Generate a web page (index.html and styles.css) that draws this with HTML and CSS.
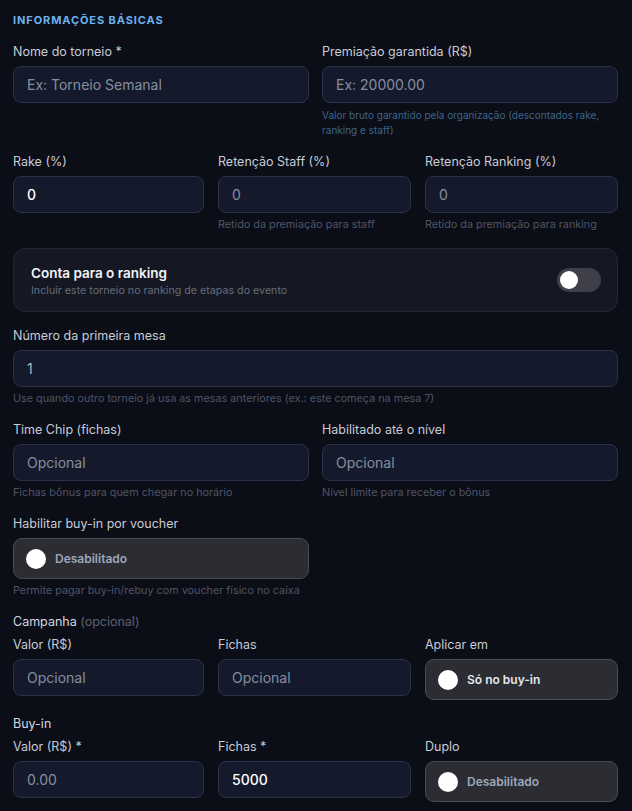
FILE: index.html
```html
<!DOCTYPE html>
<html lang="pt-BR">
<head>
<meta charset="utf-8">
<title>Informações básicas</title>
<link rel="stylesheet" href="styles.css">
</head>
<body>
<div class="form">
  <h2 class="section-title">INFORMAÇÕES BÁSICAS</h2>

  <div class="grid two">
    <div class="field">
      <label class="label">Nome do torneio *</label>
      <div class="input placeholder">Ex: Torneio Semanal</div>
    </div>
    <div class="field">
      <label class="label">Premiação garantida (R$)</label>
      <div class="input placeholder">Ex: 20000.00</div>
      <p class="help blue">Valor bruto garantido pela organização (descontados rake, ranking e staff)</p>
    </div>
  </div>

  <div class="grid three">
    <div class="field">
      <label class="label">Rake (%)</label>
      <div class="input value">0</div>
    </div>
    <div class="field">
      <label class="label">Retenção Staff (%)</label>
      <div class="input placeholder">0</div>
      <p class="help">Retido da premiação para staff</p>
    </div>
    <div class="field">
      <label class="label">Retenção Ranking (%)</label>
      <div class="input placeholder">0</div>
      <p class="help">Retido da premiação para ranking</p>
    </div>
  </div>

  <div class="card">
    <div class="card-text">
      <div class="card-title">Conta para o ranking</div>
      <div class="card-sub">Incluir este torneio no ranking de etapas do evento</div>
    </div>
    <div class="switch"><span class="knob"></span></div>
  </div>

  <div class="field">
    <label class="label">Número da primeira mesa</label>
    <div class="input value dim">1</div>
    <p class="help">Use quando outro torneio já usa as mesas anteriores (ex.: este começa na mesa 7)</p>
  </div>

  <div class="grid two">
    <div class="field">
      <label class="label">Time Chip (fichas)</label>
      <div class="input placeholder">Opcional</div>
      <p class="help">Fichas bônus para quem chegar no horário</p>
    </div>
    <div class="field">
      <label class="label">Habilitado até o nível</label>
      <div class="input placeholder">Opcional</div>
      <p class="help">Nível limite para receber o bônus</p>
    </div>
  </div>

  <div class="grid two">
    <div class="field">
      <label class="label">Habilitar buy-in por voucher</label>
      <div class="toggle-btn"><span class="dot"></span><span class="tb-text">Desabilitado</span></div>
      <p class="help">Permite pagar buy-in/rebuy com voucher físico no caixa</p>
    </div>
  </div>

  <div class="group">
    <div class="group-title">Campanha <span class="muted">(opcional)</span></div>
    <div class="grid three top">
      <div class="field">
        <label class="label">Valor (R$)</label>
        <div class="input placeholder">Opcional</div>
      </div>
      <div class="field">
        <label class="label">Fichas</label>
        <div class="input placeholder">Opcional</div>
      </div>
      <div class="field">
        <label class="label">Aplicar em</label>
        <div class="toggle-btn"><span class="dot"></span><span class="tb-text bright">Só no buy-in</span></div>
      </div>
    </div>
  </div>

  <div class="group">
    <div class="group-title">Buy-in</div>
    <div class="grid three top">
      <div class="field">
        <label class="label">Valor (R$) *</label>
        <div class="input placeholder">0.00</div>
      </div>
      <div class="field">
        <label class="label">Fichas *</label>
        <div class="input value">5000</div>
      </div>
      <div class="field">
        <label class="label">Duplo</label>
        <div class="toggle-btn"><span class="dot"></span><span class="tb-text">Desabilitado</span></div>
      </div>
    </div>
  </div>
</div>
</body>
</html>
```

FILE: styles.css
```css
* { box-sizing: border-box; }

html, body {
  margin: 0;
  padding: 0;
  background: #0b0d17;
}

body {
  font-family: Inter, "Noto Sans", "DejaVu Sans", sans-serif;
  color: #c9cfda;
}

.form {
  padding: 12px 14px 0 13px;
  display: flex;
  flex-direction: column;
  gap: 16px;
}

.section-title {
  margin: 0;
  font-size: 11px;
  line-height: 16px;
  font-weight: 700;
  letter-spacing: 0.9px;
  color: #6cb2ee;
}

.grid {
  display: grid;
  align-items: start;
}
.grid.two { grid-template-columns: 1fr 1fr; column-gap: 13px; }
.grid.three { grid-template-columns: 191px 1fr 1fr; column-gap: 14px; }

.field {
  display: flex;
  flex-direction: column;
}

.label {
  display: block;
  font-size: 12.5px;
  line-height: 16px;
  color: #c7ccd6;
  margin-bottom: 6px;
}

.input {
  height: 37px;
  border: 1px solid #2a3249;
  border-radius: 8px;
  background: #141a2b;
  padding: 0 13px;
  display: flex;
  align-items: center;
  font-size: 14px;
}
.input.placeholder { color: #868ea0; }
.input.value { color: #ffffff; font-weight: 500; }
.input.value.dim { color: #aeb5c3; font-weight: 400; font-size: 14px; }

.help {
  margin: 4px 0 0;
  font-size: 10.8px;
  line-height: 15px;
  color: #4f5566;
}
.help.blue { color: #3d6689; font-size: 10px; margin-top: 5px; }

.card {
  display: flex;
  align-items: center;
  justify-content: space-between;
  height: 64px;
  padding: 0 16px 0 17px;
  border: 1px solid #22263a;
  border-radius: 12px;
  background: #151822;
}
.card-title {
  font-size: 13.5px;
  line-height: 20px;
  font-weight: 600;
  color: #f2f4f8;
}
.card-sub {
  margin-top: 1px;
  font-size: 10.7px;
  line-height: 14px;
  color: #656c7c;
}

.switch {
  width: 44px;
  height: 24px;
  border-radius: 12px;
  background: #3e3f49;
  padding: 3px;
  display: flex;
  align-items: center;
}
.knob {
  width: 18px;
  height: 18px;
  border-radius: 50%;
  background: #ffffff;
}

.toggle-btn {
  height: 41px;
  border: 1px solid #4a4c55;
  border-radius: 9px;
  background: #2b2d33;
  display: flex;
  align-items: center;
  padding: 0 12px;
  gap: 9px;
}
.dot {
  width: 20px;
  height: 20px;
  border-radius: 50%;
  background: #ffffff;
  flex: none;
}
.tb-text {
  font-size: 12px;
  font-weight: 600;
  color: #9da7b9;
}
.tb-text.bright { color: #e4e7ee; }

.group {
  display: flex;
  flex-direction: column;
  gap: 7px;
}
.group-title {
  font-size: 12.5px;
  line-height: 16px;
  color: #d3d8e1;
}
.muted { color: #5c6272; }
```
